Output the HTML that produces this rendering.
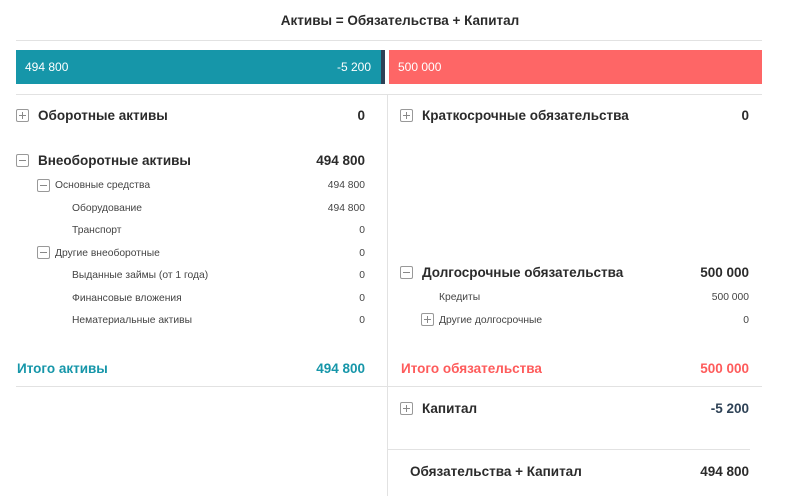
<html><head><style>
body{margin:0;width:800px;height:496px;background:#fff;font-family:"Liberation Sans",sans-serif;color:#2b2b2b;position:relative;overflow:hidden}
.a{position:absolute;white-space:nowrap}
.b{font-weight:bold;font-size:13.5px}
.s{font-size:10.3px;color:#444}
.r{text-align:right}
.box{position:absolute;width:11px;height:11px;border:1px solid #999;border-radius:2px}
.box:before{content:"";position:absolute;left:2px;top:5px;width:7px;height:1px;background:#888}
.p:after{content:"";position:absolute;left:5px;top:2px;width:1px;height:7px;background:#888}
.h{position:absolute;height:1px;background:#e2e2e2}
</style></head><body>
<div class="a b" style="left:0;width:800px;text-align:center;top:13px;font-size:13.5px">Активы = Обязательства + Капитал</div>
<div class="h" style="left:16px;width:746px;top:40px"></div>
<div class="a" style="left:16px;top:50px;width:365px;height:34px;background:#1696a9"></div>
<div class="a" style="left:381px;top:50px;width:4px;height:34px;background:#2e4256"></div>
<div class="a" style="left:389px;top:50px;width:373px;height:34px;background:#fe6666"></div>
<div class="a" style="left:25px;top:60px;color:#fff;font-size:12px">494 800</div>
<div class="a" style="left:300px;width:71px;top:60px;color:#fff;font-size:12px;text-align:right">-5 200</div>
<div class="a" style="left:398px;top:60px;color:#fff;font-size:12px">500 000</div>
<div class="h" style="left:16px;width:746px;top:94px"></div>
<div class="a" style="left:387px;top:95px;width:1px;height:401px;background:#e2e2e2"></div>
<div class="h" style="left:16px;width:746px;top:386px"></div>
<div class="h" style="left:387px;width:363px;top:449px"></div>

<div class="box p" style="left:16px;top:109px"></div>
<div class="a b" style="left:38px;top:108px">Оборотные активы</div>
<div class="a b r" style="left:265px;width:100px;top:108px">0</div>
<div class="box" style="left:16px;top:154px"></div>
<div class="a b" style="left:38px;top:153px">Внеоборотные активы</div>
<div class="a b r" style="left:265px;width:100px;top:153px">494 800</div>
<div class="box" style="left:37px;top:179px"></div>
<div class="a s" style="left:55px;top:180px">Основные средства</div>
<div class="a s r" style="left:265px;width:100px;top:180px">494 800</div>
<div class="a s" style="left:72px;top:203px">Оборудование</div>
<div class="a s r" style="left:265px;width:100px;top:203px">494 800</div>
<div class="a s" style="left:72px;top:225px">Транспорт</div>
<div class="a s r" style="left:265px;width:100px;top:225px">0</div>
<div class="box" style="left:37px;top:246px"></div>
<div class="a s" style="left:55px;top:248px">Другие внеоборотные</div>
<div class="a s r" style="left:265px;width:100px;top:248px">0</div>
<div class="a s" style="left:72px;top:270px">Выданные займы (от 1 года)</div>
<div class="a s r" style="left:265px;width:100px;top:270px">0</div>
<div class="a s" style="left:72px;top:293px">Финансовые вложения</div>
<div class="a s r" style="left:265px;width:100px;top:293px">0</div>
<div class="a s" style="left:72px;top:315px">Нематериальные активы</div>
<div class="a s r" style="left:265px;width:100px;top:315px">0</div>
<div class="a b" style="left:17px;top:361px;color:#1696a9">Итого активы</div>
<div class="a b r" style="left:265px;width:100px;top:361px;color:#1696a9">494 800</div>

<div class="box p" style="left:400px;top:109px"></div>
<div class="a b" style="left:422px;top:108px">Краткосрочные обязательства</div>
<div class="a b r" style="left:649px;width:100px;top:108px">0</div>
<div class="box" style="left:400px;top:266px"></div>
<div class="a b" style="left:422px;top:265px">Долгосрочные обязательства</div>
<div class="a b r" style="left:649px;width:100px;top:265px">500 000</div>
<div class="a s" style="left:439px;top:292px">Кредиты</div>
<div class="a s r" style="left:649px;width:100px;top:292px">500 000</div>
<div class="box p" style="left:421px;top:313px"></div>
<div class="a s" style="left:439px;top:315px">Другие долгосрочные</div>
<div class="a s r" style="left:649px;width:100px;top:315px">0</div>
<div class="a b" style="left:401px;top:361px;color:#fe5b5b">Итого обязательства</div>
<div class="a b r" style="left:649px;width:100px;top:361px;color:#fe5b5b">500 000</div>
<div class="box p" style="left:400px;top:402px"></div>
<div class="a b" style="left:422px;top:401px">Капитал</div>
<div class="a b r" style="left:649px;width:100px;top:401px;color:#2e4256">-5 200</div>
<div class="a b" style="left:410px;top:464px">Обязательства + Капитал</div>
<div class="a b r" style="left:649px;width:100px;top:464px">494 800</div>
</body></html>
